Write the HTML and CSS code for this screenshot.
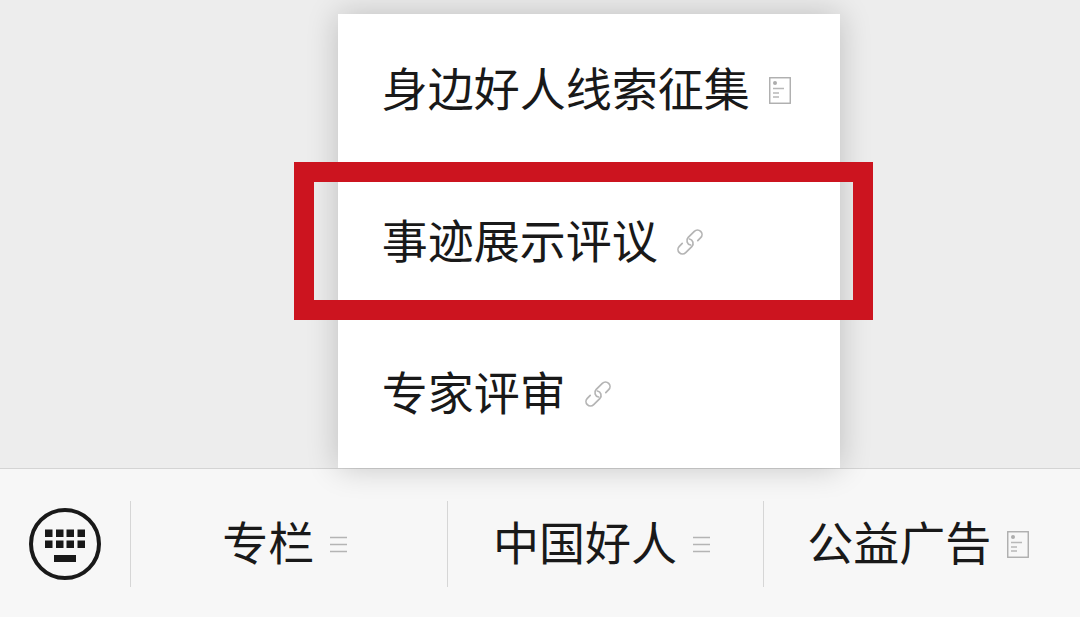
FILE: index.html
```html
<!DOCTYPE html>
<html lang="zh-CN">
<head>
    <meta charset="UTF-8">
    <meta name="viewport" content="width=device-width, initial-scale=1.0">
    <title>中国好人</title>
    <link rel="stylesheet" href="styles.css">
</head>
<body>
    <svg class="sprite" aria-hidden="true">
        <symbol id="icon-doc" viewBox="0 0 22 27">
            <rect x="0.75" y="0.75" width="20.5" height="25.5" fill="none" stroke="#adadad" stroke-width="1.4"/>
            <circle cx="6" cy="6" r="2" fill="#adadad"/>
            <path d="M4 11.5h11M4 16h6M4 20h6" fill="none" stroke="#b8b8b8" stroke-width="1.4"/>
        </symbol>
        <symbol id="icon-link" viewBox="0 0 26 26">
            <g fill="none" stroke="#b4b4b4" stroke-width="1.7" stroke-linecap="round" transform="rotate(-45 13 13)">
                <path d="M11.3 15.5A4.5 4.5 0 0 1 15 8.5H23.6A4.5 4.5 0 0 1 23.6 17.5H19.5"/>
                <path d="M11.3 15.5A4.5 4.5 0 0 1 15 8.5H23.6A4.5 4.5 0 0 1 23.6 17.5H19.5" transform="rotate(180 13 13)"/>
            </g>
        </symbol>
        <symbol id="icon-list" viewBox="0 0 17 17">
            <path d="M0 1.5h17M0 8.5h17M0 15.5h17" fill="none" stroke="#b4b4b4" stroke-width="1.5"/>
        </symbol>
    </svg>

    <main class="chat"></main>

    <nav class="toolbar">
        <button class="keyboard" type="button" aria-label="键盘">
            <svg width="72" height="72" viewBox="0 0 72 72">
                <circle cx="36" cy="36" r="34" fill="none" stroke="#191919" stroke-width="4"/>
                <path d="M16 21.5h7.5v7.5h-7.5zM27 21.5h7.5v7.5h-7.5zM37.5 21.5h7.5v7.5h-7.5zM48.5 21.5h7.5v7.5h-7.5zM16 32.5h7.5v7.5h-7.5zM27 32.5h7.5v7.5h-7.5zM37.5 32.5h7.5v7.5h-7.5zM48.5 32.5h7.5v7.5h-7.5zM25 47h22v7h-22z" fill="#191919"/>
            </svg>
        </button>

        <div class="tab">
            <button class="tab-button" type="button">
                <span class="label">专栏</span>
                <svg class="icon-list"><use href="#icon-list"/></svg>
            </button>
        </div>

        <div class="tab">
            <div class="menu">
                <a class="menu-item" href="#">
                    <span class="label">身边好人线索征集</span>
                    <svg class="icon-doc"><use href="#icon-doc"/></svg>
                </a>
                <a class="menu-item highlight" href="#">
                    <span class="label">事迹展示评议</span>
                    <svg class="icon-link"><use href="#icon-link"/></svg>
                </a>
                <a class="menu-item" href="#">
                    <span class="label">专家评审</span>
                    <svg class="icon-link"><use href="#icon-link"/></svg>
                </a>
            </div>
            <button class="tab-button" type="button">
                <span class="label">中国好人</span>
                <svg class="icon-list"><use href="#icon-list"/></svg>
            </button>
        </div>

        <div class="tab">
            <button class="tab-button" type="button">
                <span class="label">公益广告</span>
                <svg class="icon-doc"><use href="#icon-doc"/></svg>
            </button>
        </div>
    </nav>
</body>
</html>
```

FILE: styles.css
```css
* {
    box-sizing: border-box;
}

body {
    margin: 0;
    min-height: 100vh;
    display: flex;
    flex-direction: column;
    overflow-x: hidden;
    background-color: #ededed;
    color: #191919;
    font-family: "Noto Sans CJK SC", sans-serif;
    font-size: 46px;
    line-height: 46px;
}

button {
    margin: 0;
    padding: 0;
    border: none;
    background: none;
    color: inherit;
    font: inherit;
    cursor: pointer;
}

svg {
    display: block;
    flex: none;
}

.sprite {
    position: absolute;
    width: 0;
    height: 0;
}

.icon-doc {
    width: 22px;
    height: 27px;
}

.icon-link {
    width: 26px;
    height: 26px;
}

.icon-list {
    width: 17px;
    height: 17px;
}

.label {
    padding-bottom: 8px;
}

.chat {
    flex: 1;
}

/* bottom bar */
.toolbar {
    display: flex;
    padding: 32px 0 30px;
    border-top: 1px solid #d4d4d4;
    background-color: #f7f7f7;
}

.keyboard {
    display: flex;
    justify-content: center;
    align-items: center;
    width: 130px;
    height: 86px;
}

.tab {
    position: relative;
    flex: 1;
    border-left: 1px solid #d6d6d6;
}

.tab-button {
    display: flex;
    justify-content: center;
    align-items: center;
    gap: 16px;
    width: 100%;
    height: 86px;
    padding-right: 8px;
    white-space: nowrap;
}

/* popup above the middle tab */
.menu {
    position: absolute;
    left: -110px;
    bottom: 119px;
    display: flex;
    flex-direction: column;
    gap: 2px;
    background-color: #ffffff;
    box-shadow: 0 0 30px rgba(0, 0, 0, 0.2);
}

.menu-item {
    position: relative;
    display: flex;
    align-items: center;
    gap: 19px;
    padding: 49px 49px 47px 44px;
    color: inherit;
    text-decoration: none;
    white-space: nowrap;
}

.highlight::after {
    content: "";
    position: absolute;
    inset: -4px -33px -4px -44px;
    border: 20px solid #cc141f;
}
```
